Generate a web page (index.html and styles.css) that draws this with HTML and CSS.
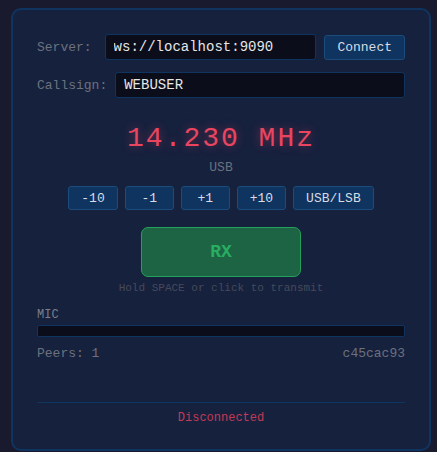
FILE: index.html
```html
<!DOCTYPE html>
<html lang="en">
<head>
    <meta charset="UTF-8">
    <meta name="viewport" content="width=device-width, initial-scale=1.0">
    <title>Web Radio</title>
    <link rel="stylesheet" href="styles.css">
</head>
<body>
    <div class="radio">
        <div class="row">
            <label class="lbl lbl-server">Server:</label>
            <input type="text" class="field" value="ws://localhost:9090">
            <button class="btn btn-connect">Connect</button>
        </div>
        <div class="row">
            <label class="lbl">Callsign:</label>
            <input type="text" class="field" value="WEBUSER">
        </div>

        <div class="freq">14.230 MHz</div>
        <div class="mode">USB</div>

        <div class="tune">
            <button class="btn btn-tune">-10</button>
            <button class="btn btn-tune">-1</button>
            <button class="btn btn-tune">+1</button>
            <button class="btn btn-tune">+10</button>
            <button class="btn btn-tune">USB/LSB</button>
        </div>

        <button class="ptt">RX</button>
        <div class="hint">Hold SPACE or click to transmit</div>

        <div class="mic-label">MIC</div>
        <div class="meter"><div class="meter-fill"></div></div>

        <div class="info">
            <span>Peers: 1</span>
            <span>c45cac93</span>
        </div>

        <div class="status">Disconnected</div>
    </div>
</body>
</html>
```

FILE: styles.css
```css
body {
    margin: 0;
    padding: 8px 0 0 11px;
    background-color: #1a1a2e;
    font-family: "Liberation Mono", "Courier New", monospace;
    color: #e0e0e0;
}

.radio {
    width: 420px;
    box-sizing: border-box;
    background-color: #16213e;
    border: 2px solid #0f3460;
    border-radius: 10px;
    padding: 24px;
}

.row {
    display: flex;
    align-items: center;
    gap: 8px;
    margin-bottom: 12px;
}

.lbl {
    font-size: 13px;
    color: #6c717d;
    flex-shrink: 0;
}

.lbl-server {
    margin-right: 5px;
}

.field {
    flex: 1;
    min-width: 0;
    height: 26px;
    box-sizing: border-box;
    background-color: #0b0d1a;
    border: 1px solid #0f3460;
    border-radius: 3px;
    color: #e6e6e6;
    font-family: inherit;
    font-size: 14px;
    padding: 0 8px;
}

.field:focus {
    outline: none;
}

.btn {
    font-family: inherit;
    font-size: 13px;
    color: #d8dce4;
    background-color: #0f3460;
    border: 1px solid #1b4c7c;
    border-radius: 3px;
    cursor: pointer;
}

.btn-connect {
    height: 25px;
    padding: 0 12px;
}

.freq {
    margin-top: 25px;
    text-align: center;
    font-size: 28px;
    line-height: 32px;
    letter-spacing: 2px;
    color: #e94560;
    text-shadow: 0 0 10px rgba(233, 69, 96, 0.45);
}

.mode {
    margin-top: 5px;
    text-align: center;
    font-size: 13px;
    line-height: 15px;
    color: #6c717d;
}

.tune {
    display: flex;
    justify-content: center;
    gap: 7px;
    margin-top: 11px;
}

.btn-tune {
    height: 24px;
    min-width: 49px;
    padding: 0 12px;
}

.ptt {
    display: block;
    margin: 17px auto 0;
    width: 160px;
    height: 50px;
    background-color: #1d6445;
    border: 1px solid #25a05a;
    border-radius: 7px;
    color: #27ae60;
    font-family: inherit;
    font-size: 18px;
    font-weight: bold;
    cursor: pointer;
}

.hint {
    margin-top: 4px;
    text-align: center;
    font-size: 11px;
    line-height: 14px;
    color: #454a58;
}

.mic-label {
    margin-top: 13px;
    font-size: 12px;
    line-height: 14px;
    color: #7a7f8a;
}

.meter {
    margin-top: 3px;
    height: 12px;
    box-sizing: border-box;
    background-color: #0b0d1a;
    border: 1px solid #0f3460;
    border-radius: 2px;
}

.meter-fill {
    width: 0;
    height: 100%;
    background-color: #27ae60;
}

.info {
    display: flex;
    justify-content: space-between;
    margin-top: 9px;
    font-size: 13px;
    line-height: 15px;
    color: #6c717d;
}

.status {
    margin-top: 41px;
    border-top: 1px solid #0f3460;
    padding-top: 8px;
    text-align: center;
    font-size: 12px;
    line-height: 14px;
    color: #c23a55;
}
```
